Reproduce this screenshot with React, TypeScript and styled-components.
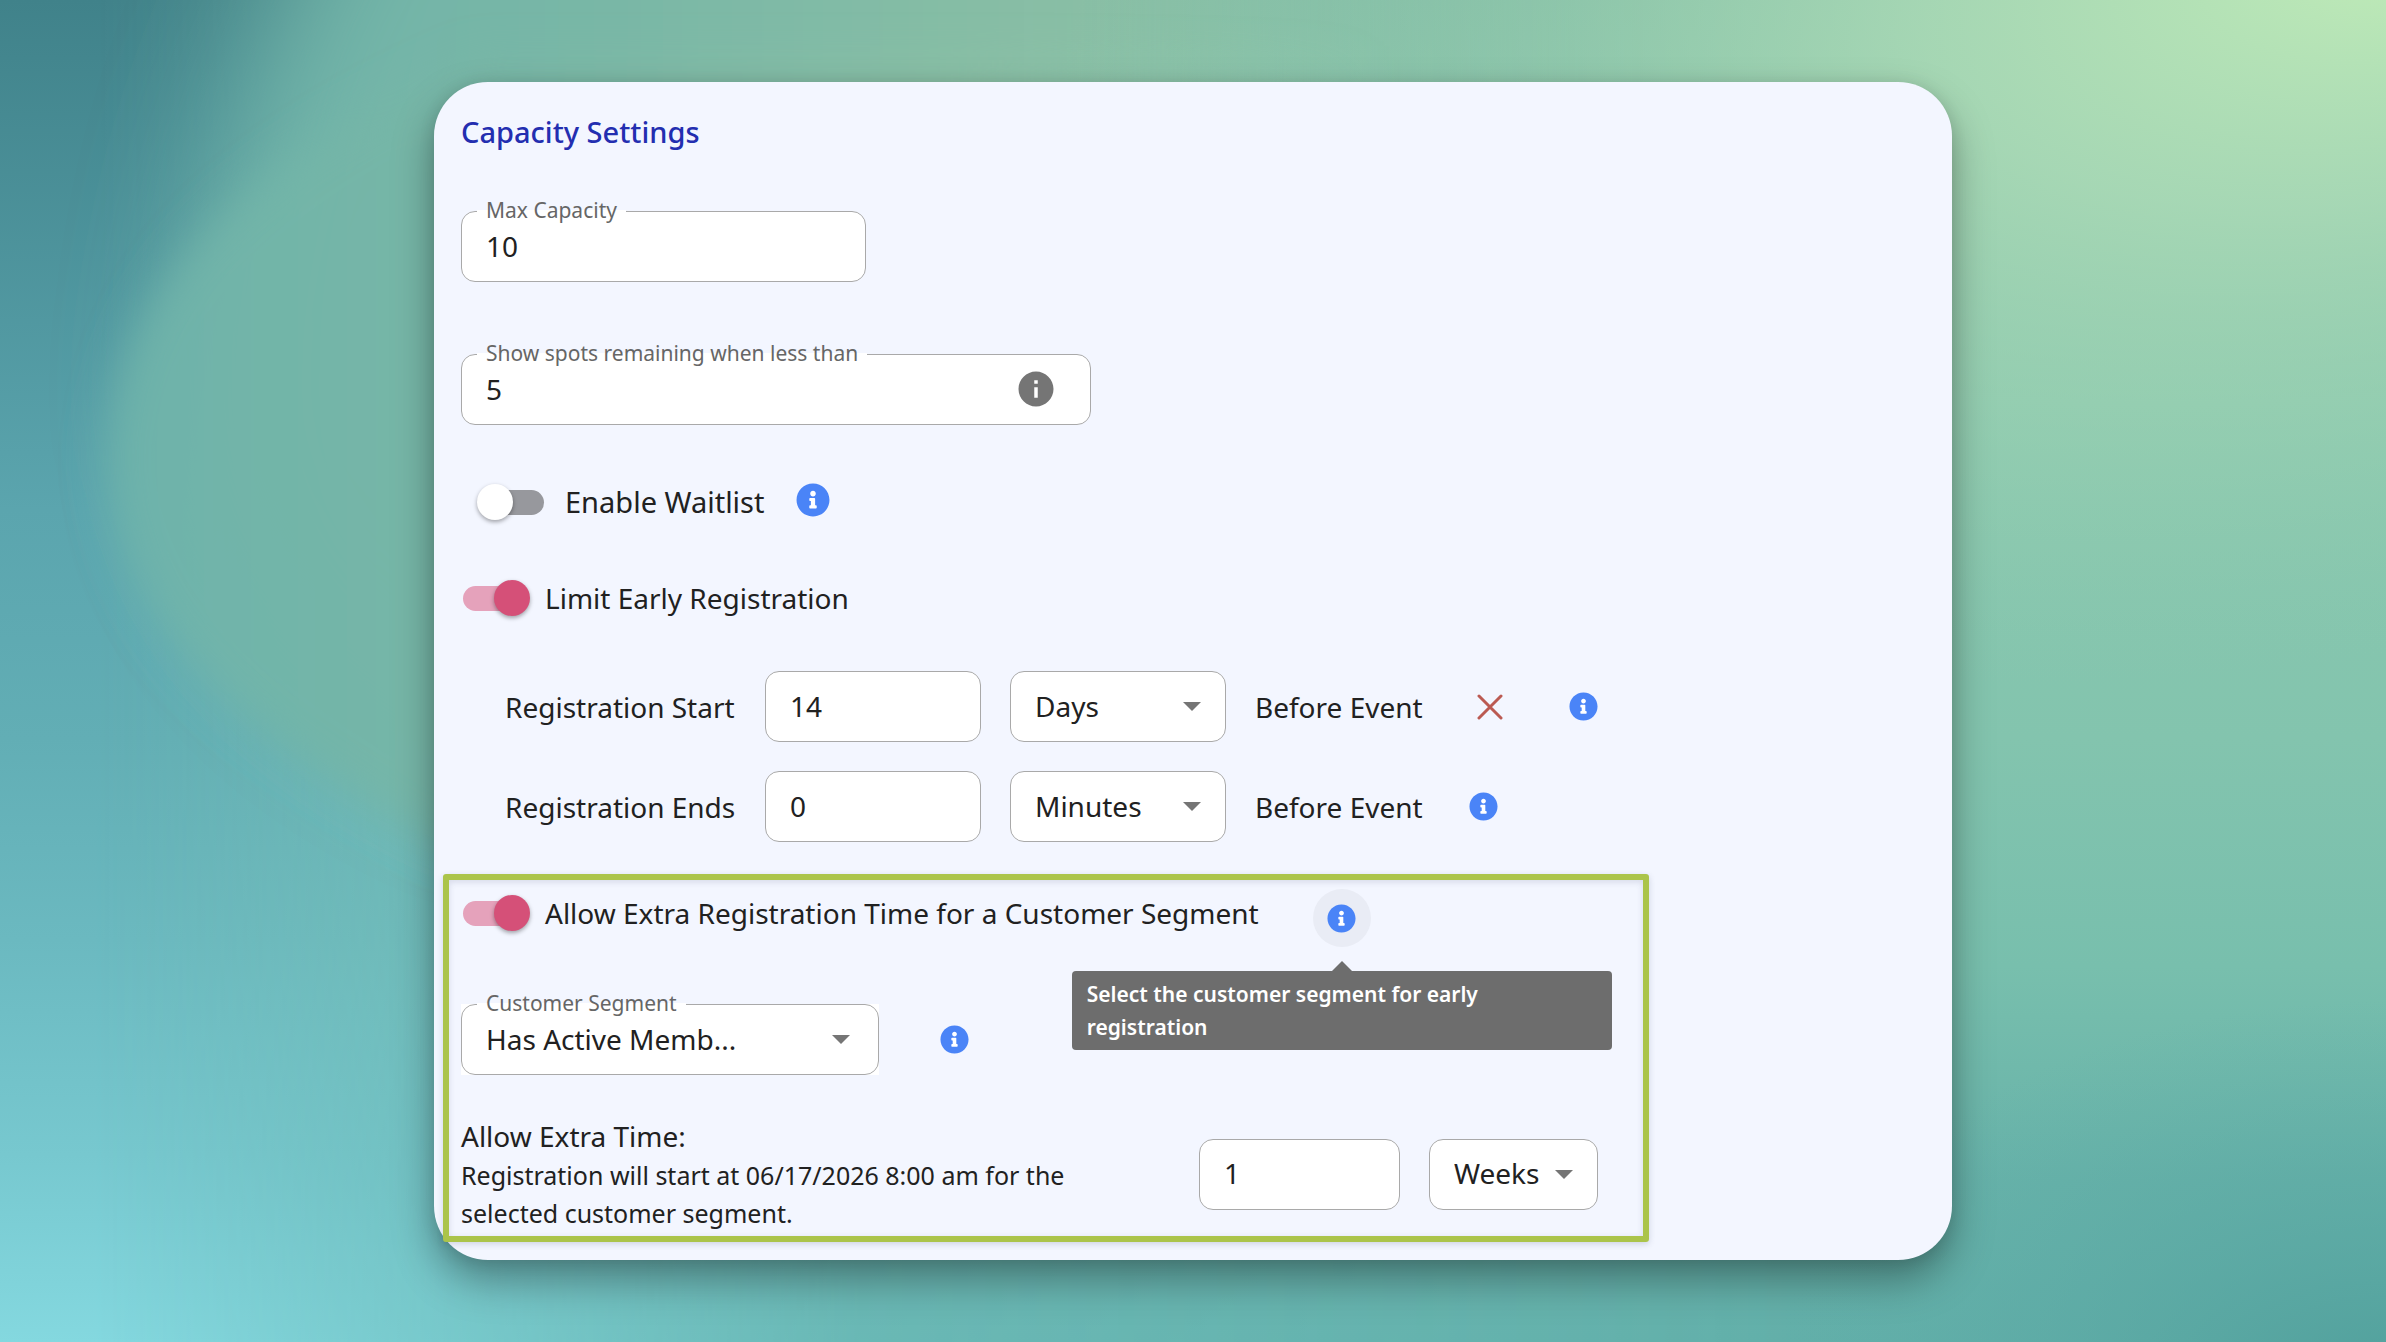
import React, { useId, useState } from "react";
import styled, { createGlobalStyle, css } from "styled-components";

const GlobalStyle = createGlobalStyle`
  *, *::before, *::after { box-sizing: border-box; }
  html, body { margin: 0; }
  body, button, input, select {
    font-family: "Noto Sans", "Open Sans", sans-serif;
    font-size: 28px;
    line-height: 40px;
    color: #212121;
  }
`;

const Page = styled.main`
  position: relative;
  z-index: 0;
  min-height: 100vh;
  padding: 82px;
  display: flex;
  align-items: flex-start;
  justify-content: center;
`;

const Wallpaper = styled.svg`
  position: absolute;
  inset: 0;
  width: 100%;
  height: 100%;
  z-index: -1;
`;

const Card = styled.section`
  width: 100%;
  max-width: 1518px;
  padding: 29px 9px 18px;
  border-radius: 54px;
  background: #f3f6ff;
  box-shadow: 0 20px 40px rgba(0, 0, 0, 0.34), 0 2px 16px rgba(0, 0, 0, 0.1);
`;

const Body = styled.div`
  padding: 0 18px;
  display: flex;
  flex-direction: column;
  align-items: flex-start;
`;

const Title = styled.h1`
  margin: 0 0 58px;
  font-size: 29px;
  font-weight: 500;
  line-height: 42px;
  color: #232eb0;
`;

const outline = css`
  height: 71px;
  border: 1px solid #a9a9a9;
  border-radius: 14px;
  background: #fff;
`;

const FieldBox = styled.div<{ $width: number; $gap?: number; $backed?: boolean }>`
  position: relative;
  width: ${(p) => p.$width}px;
  max-width: 100%;
  margin-bottom: ${(p) => p.$gap ?? 0}px;
  background: ${(p) => (p.$backed ? "#fff" : "transparent")};
`;

const FloatingLabel = styled.label`
  position: absolute;
  left: 16px;
  top: -17px;
  padding: 0 9px;
  font-size: 21px;
  line-height: 32px;
  color: #666;
  background: linear-gradient(transparent 16px, #fff 16px);
`;

const TextInput = styled.input`
  ${outline}
  display: block;
  width: 100%;
  padding: 0 24px 2px;
  outline: none;
`;

const Select = styled.select`
  ${outline}
  display: block;
  width: 100%;
  padding: 0 44px 2px 24px;
  appearance: none;
  outline: none;
  text-overflow: ellipsis;
`;

const Caret = styled.span<{ $inset: number }>`
  position: absolute;
  right: ${(p) => p.$inset}px;
  top: 31px;
  border: solid transparent;
  border-width: 9px 9px 0;
  border-top-color: #757575;
  pointer-events: none;
`;

const InputAdornment = styled.button`
  position: absolute;
  right: 34px;
  top: 14px;
  padding: 0;
  border: 0;
  background: none;
  display: flex;
`;

const Row = styled.div<{ $gap?: number; $below?: number; $indent?: number; $align?: string }>`
  display: flex;
  align-items: ${(p) => p.$align ?? "center"};
  gap: ${(p) => p.$gap ?? 29}px;
  margin-bottom: ${(p) => p.$below ?? 0}px;
  padding-left: ${(p) => p.$indent ?? 0}px;
`;

const SwitchLabel = styled.label<{ $gap: number; $height: number; $size: number }>`
  display: flex;
  align-items: center;
  gap: ${(p) => p.$gap}px;
  height: ${(p) => p.$height}px;
  font-size: ${(p) => p.$size}px;
`;

const SwitchInput = styled.input`
  appearance: none;
  position: relative;
  flex: none;
  width: 68px;
  height: 36px;
  margin: 0;

  &::before {
    content: "";
    position: absolute;
    inset: 6px 1px 5px 2px;
    border-radius: 13px;
    background: #97989d;
  }
  &::after {
    content: "";
    position: absolute;
    left: 0;
    top: 0;
    width: 36px;
    height: 36px;
    border-radius: 50%;
    background: #fff;
    box-shadow: 0 2px 4px rgba(0, 0, 0, 0.35);
  }
  &:checked::before { background: #e5a2bb; }
  &:checked::after { left: 33px; background: #d55078; }
`;

const IconButton = styled.button<{ $active?: boolean; $wide?: boolean }>`
  position: relative;
  flex: none;
  width: ${(p) => (p.$wide ? 71 : 58)}px;
  height: 58px;
  padding: 0;
  border: 0;
  border-radius: 50%;
  display: grid;
  place-items: center;
  background: ${(p) => (p.$active ? "#e9ecf5" : "transparent")};
`;

const RowLabel = styled.label`
  width: 231px;
  white-space: nowrap;
`;

const Suffix = styled.span`
  width: 170px;
  white-space: nowrap;
`;

const Highlight = styled.div`
  width: 1206px;
  max-width: 100%;
  border: 6px solid #abc44a;
  border-radius: 3px;
  padding: 9px 45px 4px 12px;
  box-shadow: 0 2px 6px rgba(60, 70, 110, 0.2), inset 0 2px 6px rgba(60, 70, 110, 0.16);
`;

const Tooltip = styled.span`
  position: absolute;
  top: 82px;
  left: -241px;
  width: 540px;
  padding: 7px 15px 6px;
  border-radius: 4px;
  background: #6d6d6d;
  color: #fff;
  font-size: 21px;
  font-weight: 600;
  line-height: 33px;
  text-align: left;
  z-index: 2;

  &::before {
    content: "";
    position: absolute;
    left: 260px;
    bottom: 100%;
    border: solid transparent;
    border-width: 0 10px 10px;
    border-bottom-color: #6d6d6d;
  }
`;

const ExtraRow = styled.div`
  display: flex;
  align-items: center;
  gap: 29px;
`;

const ExtraText = styled.div`
  flex: 1;
`;

const ExtraHeading = styled.label`
  display: block;
`;

const ExtraNote = styled.p`
  margin: 0;
  max-width: 640px;
  font-size: 25px;
  line-height: 38px;
`;

function Backdrop() {
  return (
    <Wallpaper viewBox="0 0 2386 1342" preserveAspectRatio="none" aria-hidden="true">
      <defs>
        <linearGradient id="sea" x1="0" y1="0" x2="0" y2="1">
          <stop offset="0" stopColor="#40828a" />
          <stop offset="0.38" stopColor="#5ba5ae" />
          <stop offset="0.55" stopColor="#62aeb5" />
          <stop offset="0.7" stopColor="#6bb9c0" />
          <stop offset="0.86" stopColor="#77c8cf" />
          <stop offset="1" stopColor="#84d8df" />
        </linearGradient>
        <linearGradient id="shore" x1="0" y1="0" x2="0" y2="1">
          <stop offset="0" stopColor="#80bba3" />
          <stop offset="0.3" stopColor="#8ac8ae" />
          <stop offset="0.55" stopColor="#83c4ae" />
          <stop offset="0.72" stopColor="#78bfad" />
          <stop offset="0.88" stopColor="#67b2a9" />
          <stop offset="1" stopColor="#62afa9" />
        </linearGradient>
        <linearGradient id="fade" x1="0" y1="0" x2="1" y2="0">
          <stop offset="0.04" stopColor="#fff" stopOpacity="0" />
          <stop offset="0.36" stopColor="#fff" stopOpacity="0.78" />
          <stop offset="0.75" stopColor="#fff" stopOpacity="1" />
        </linearGradient>
        <mask id="fadeMask">
          <rect width="2386" height="1342" fill="url(#fade)" />
        </mask>
        <linearGradient id="hill" x1="0" y1="0" x2="1" y2="0">
          <stop offset="0" stopColor="#6fb4ab" />
          <stop offset="0.2" stopColor="#77b6a6" />
          <stop offset="0.5" stopColor="#8abfa5" />
          <stop offset="0.75" stopColor="#8fc9ae" stopOpacity="0" />
        </linearGradient>
        <radialGradient id="sun" gradientUnits="userSpaceOnUse" cx="0" cy="0" r="1" gradientTransform="translate(2420 -60) rotate(168) scale(1400 700)">
          <stop offset="0" stopColor="#c2edb8" />
          <stop offset="0.36" stopColor="#addcb7" stopOpacity="0.82" />
          <stop offset="1" stopColor="#8fcab0" stopOpacity="0" />
        </radialGradient>
        <radialGradient id="deep" gradientUnits="userSpaceOnUse" cx="0" cy="0" r="1" gradientTransform="translate(2386 1400) scale(620 400)">
          <stop offset="0" stopColor="#509f9b" />
          <stop offset="1" stopColor="#5fada8" stopOpacity="0" />
        </radialGradient>
        <filter id="soft" x="-20%" y="-20%" width="140%" height="140%">
          <feGaussianBlur stdDeviation="20" />
        </filter>
        <filter id="softer" x="-20%" y="-20%" width="140%" height="140%">
          <feGaussianBlur stdDeviation="60" />
        </filter>
      </defs>
      <rect width="2386" height="1342" fill="url(#sea)" />
      <rect width="2386" height="1342" fill="url(#shore)" mask="url(#fadeMask)" />
      <path
        d="M400 -200C290 -20 200 150 190 400C200 560 300 690 520 780L2000 860L2000 -200Z"
        fill="url(#hill)"
        filter="url(#softer)"
      />
      <path
        d="M480 60C240 160 115 290 106 450C104 620 230 730 450 850L1800 900L1800 60Z"
        fill="url(#hill)"
        fillOpacity="0.88"
        filter="url(#soft)"
      />
      <rect width="2386" height="1342" fill="url(#sun)" />
      <rect width="2386" height="1342" fill="url(#deep)" />
    </Wallpaper>
  );
}

function InfoIcon({ size }: { size: number }) {
  return (
    <svg width={size} height={size} viewBox="0 0 512 512" aria-hidden="true">
      <circle cx="256" cy="256" r="240" fill="#fff" />
      <path
        fill="#4a84f7"
        d="M256 8C119.043 8 8 119.083 8 256c0 136.997 111.043 248 248 248s248-111.003 248-248C504 119.083 392.957 8 256 8zm0 110c23.196 0 42 18.804 42 42s-18.804 42-42 42-42-18.804-42-42 18.804-42 42-42zm56 254c0 6.627-5.373 12-12 12h-88c-6.627 0-12-5.373-12-12v-24c0-6.627 5.373-12 12-12h12v-64h-12c-6.627 0-12-5.373-12-12v-24c0-6.627 5.373-12 12-12h64c6.627 0 12 5.373 12 12v100h12c6.627 0 12 5.373 12 12v24z"
      />
    </svg>
  );
}

function HintIcon() {
  return (
    <svg width="42" height="42" viewBox="0 0 24 24" aria-hidden="true">
      <path
        fill="#757575"
        d="M12 2C6.48 2 2 6.48 2 12s4.48 10 10 10 10-4.48 10-10S17.52 2 12 2zm1 15h-2v-6h2v6zm0-8h-2V7h2v2z"
      />
    </svg>
  );
}

function RemoveIcon() {
  return (
    <svg width="26" height="26" viewBox="0 0 26 26" aria-hidden="true">
      <path d="M2 2l22 22M24 2L2 24" stroke="#bb5a52" strokeWidth="3" strokeLinecap="round" fill="none" />
    </svg>
  );
}

type SwitchProps = { label: string; on: boolean; gap: number; height?: number; size?: number };

function Switch({ label, on, gap, height = 40, size = 28 }: SwitchProps) {
  const [checked, setChecked] = useState(on);
  return (
    <SwitchLabel $gap={gap} $height={height} $size={size}>
      <SwitchInput type="checkbox" role="switch" checked={checked} onChange={() => setChecked(!checked)} />
      {label}
    </SwitchLabel>
  );
}

type FieldProps = {
  width: number;
  value: string;
  label?: string;
  name?: string;
  id?: string;
  gap?: number;
  children?: React.ReactNode;
};

function TextField({ width, value, label, name, id, gap, children }: FieldProps) {
  const auto = useId();
  return (
    <FieldBox $width={width} $gap={gap}>
      <TextInput id={id ?? auto} defaultValue={value} aria-label={name} />
      {label && <FloatingLabel htmlFor={id ?? auto}>{label}</FloatingLabel>}
      {children}
    </FieldBox>
  );
}

function SelectField({ width, value, label, name, gap }: FieldProps) {
  const auto = useId();
  return (
    <FieldBox $width={width} $gap={gap} $backed={Boolean(label)}>
      <Select id={auto} defaultValue={value} aria-label={name}>
        <option>{value}</option>
      </Select>
      {label && <FloatingLabel htmlFor={auto}>{label}</FloatingLabel>}
      <Caret $inset={label ? 29 : 25} />
    </FieldBox>
  );
}

export default function App() {
  return (
    <>
      <GlobalStyle />
      <Page>
        <Backdrop />
        <Card>
          <Body>
            <Title>Capacity Settings</Title>
            <TextField width={405} label="Max Capacity" value="10" gap={72} />
            <TextField width={630} label="Show spots remaining when less than" value="5" gap={46}>
              <InputAdornment type="button" aria-label="About spots remaining">
                <HintIcon />
              </InputAdornment>
            </TextField>
            <Row $gap={20} $indent={16} $below={49} $align="flex-end">
              <Switch label="Enable Waitlist" on={false} gap={20} height={54} size={29} />
              <IconButton type="button" aria-label="About the waitlist">
                <InfoIcon size={34} />
              </IconButton>
            </Row>
            <Row $below={53}>
              <Switch label="Limit Early Registration" on gap={16} />
            </Row>
            <Row $indent={44} $below={29}>
              <RowLabel htmlFor="start">Registration Start</RowLabel>
              <TextField id="start" width={216} value="14" />
              <SelectField width={216} name="Registration start unit" value="Days" />
              <Suffix>Before Event</Suffix>
              <IconButton type="button" $wide aria-label="Remove registration start">
                <RemoveIcon />
              </IconButton>
              <IconButton type="button" aria-label="About registration start">
                <InfoIcon size={29} />
              </IconButton>
            </Row>
            <Row $indent={44} $below={32}>
              <RowLabel htmlFor="ends">Registration Ends</RowLabel>
              <TextField id="ends" width={216} value="0" />
              <SelectField width={216} name="Registration end unit" value="Minutes" />
              <Suffix>Before Event</Suffix>
              <IconButton type="button" aria-label="About registration end">
                <InfoIcon size={29} />
              </IconButton>
            </Row>
          </Body>
          <Highlight>
            <Row $gap={54} $below={57} $align="flex-start">
              <Switch label="Allow Extra Registration Time for a Customer Segment" on gap={16} height={48} />
              <IconButton type="button" $active aria-describedby="segment-tip" aria-label="About extra registration time">
                <InfoIcon size={29} />
                <Tooltip id="segment-tip" role="tooltip">
                  Select the customer segment for early registration
                </Tooltip>
              </IconButton>
            </Row>
            <Row $gap={46} $below={41}>
              <SelectField width={418} label="Customer Segment" value="Has Active Memb..." />
              <IconButton type="button" aria-label="About customer segments">
                <InfoIcon size={29} />
              </IconButton>
            </Row>
            <ExtraRow>
              <ExtraText>
                <ExtraHeading htmlFor="extra">Allow Extra Time:</ExtraHeading>
                <ExtraNote>Registration will start at 06/17/2026 8:00 am for the selected customer segment.</ExtraNote>
              </ExtraText>
              <TextField id="extra" width={201} value="1" />
              <SelectField width={169} name="Extra time unit" value="Weeks" />
            </ExtraRow>
          </Highlight>
        </Card>
      </Page>
    </>
  );
}
